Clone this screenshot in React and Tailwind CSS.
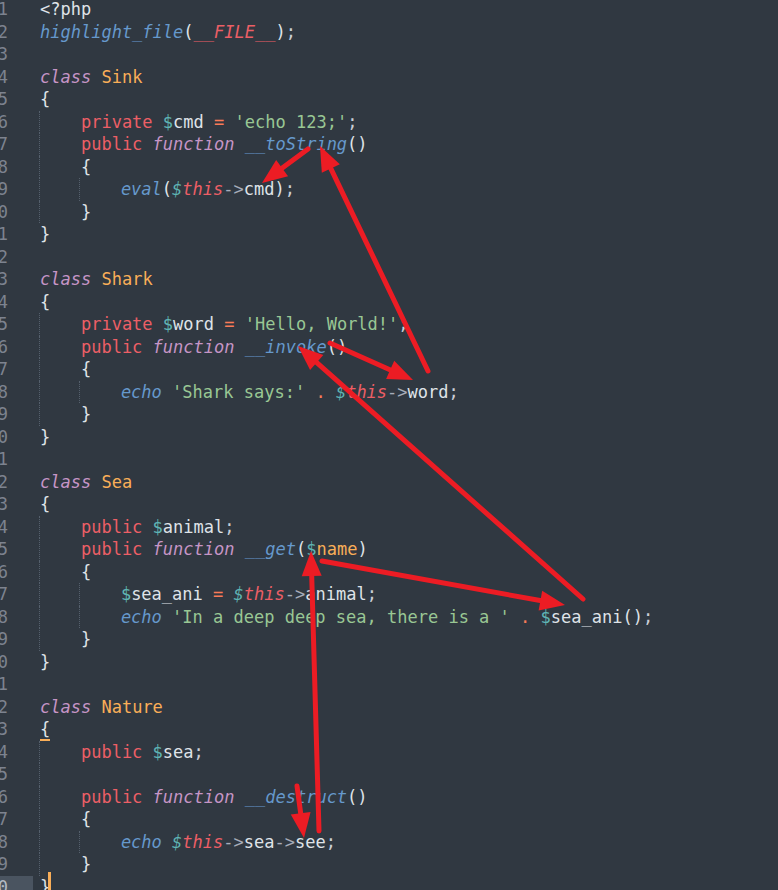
import React from "react";

const C = {
  d: "text-[#dfe3e8]",
  k: "text-[#ec5f66]",
  p: "text-[#c695c6] italic",
  b: "text-[#6699cc] italic",
  o: "text-[#f9ae58]",
  g: "text-[#99c794]",
  t: "text-[#5fb4b4]",
  op: "text-[#f97b58]",
  a: "text-[#a6acb9]",
  th: "text-[#ec5f66] italic",
  ti: "text-[#5fb4b4] italic",
  fr: "text-[#ec5f66] italic",
  s: "text-[#c9ced6]",
  u: "text-[#dfe3e8] border-b-2 border-[#f9ae58]",
};

const L = [
  [0, ["d", "<?php"]],
  [0, ["b", "highlight_file"], ["d", "("], ["fr", "__FILE__"], ["d", ")"], ["s", ";"]],
  [0],
  [0, ["p", "class"], ["d", " "], ["o", "Sink"]],
  [0, ["d", "{"]],
  [1, ["k", "private"], ["d", " "], ["t", "$"], ["d", "cmd "], ["op", "="], ["d", " "], ["g", "'echo 123;'"], ["s", ";"]],
  [1, ["k", "public"], ["d", " "], ["p", "function"], ["d", " "], ["b", "__toString"], ["d", "()"]],
  [1, ["d", "{"]],
  [2, ["b", "eval"], ["d", "("], ["ti", "$"], ["th", "this"], ["a", "->"], ["d", "cmd"], ["d", ")"], ["s", ";"]],
  [1, ["d", "}"]],
  [0, ["d", "}"]],
  [0],
  [0, ["p", "class"], ["d", " "], ["o", "Shark"]],
  [0, ["d", "{"]],
  [1, ["k", "private"], ["d", " "], ["t", "$"], ["d", "word "], ["op", "="], ["d", " "], ["g", "'Hello, World!'"], ["s", ";"]],
  [1, ["k", "public"], ["d", " "], ["p", "function"], ["d", " "], ["b", "__invoke"], ["d", "()"]],
  [1, ["d", "{"]],
  [2, ["b", "echo"], ["d", " "], ["g", "'Shark says:'"], ["d", " "], ["op", "."], ["d", " "], ["ti", "$"], ["th", "this"], ["a", "->"], ["d", "word"], ["s", ";"]],
  [1, ["d", "}"]],
  [0, ["d", "}"]],
  [0],
  [0, ["p", "class"], ["d", " "], ["o", "Sea"]],
  [0, ["d", "{"]],
  [1, ["k", "public"], ["d", " "], ["t", "$"], ["d", "animal"], ["s", ";"]],
  [1, ["k", "public"], ["d", " "], ["p", "function"], ["d", " "], ["b", "__get"], ["d", "("], ["t", "$"], ["o", "name"], ["d", ")"]],
  [1, ["d", "{"]],
  [2, ["t", "$"], ["d", "sea_ani "], ["op", "="], ["d", " "], ["ti", "$"], ["th", "this"], ["a", "->"], ["d", "animal"], ["s", ";"]],
  [2, ["b", "echo"], ["d", " "], ["g", "'In a deep deep sea, there is a '"], ["d", " "], ["op", "."], ["d", " "], ["t", "$"], ["d", "sea_ani()"], ["s", ";"]],
  [1, ["d", "}"]],
  [0, ["d", "}"]],
  [0],
  [0, ["p", "class"], ["d", " "], ["o", "Nature"]],
  [0, ["u", "{"]],
  [1, ["k", "public"], ["d", " "], ["t", "$"], ["d", "sea"], ["s", ";"]],
  [1],
  [1, ["k", "public"], ["d", " "], ["p", "function"], ["d", " "], ["b", "__destruct"], ["d", "()"]],
  [1, ["d", "{"]],
  [2, ["b", "echo"], ["d", " "], ["ti", "$"], ["th", "this"], ["a", "->"], ["d", "sea"], ["a", "->"], ["d", "see"], ["s", ";"]],
  [1, ["d", "}"]],
  [0, ["u", "}"], ["cursor", ""]],
];

const ARROWS = [
  [308, 149, 262, 183],
  [428, 371, 320, 146],
  [330, 343, 413, 380],
  [583, 599, 298, 346],
  [322, 561, 565, 605],
  [319, 831, 311, 551],
  [297, 786, 304, 838],
];

function Arrow({ x1, y1, x2, y2 }) {
  const dx = x2 - x1;
  const dy = y2 - y1;
  const len = Math.hypot(dx, dy);
  const ux = dx / len;
  const uy = dy / len;
  const hl = 25;
  const hw = 10;
  const bx = x2 - ux * hl;
  const by = y2 - uy * hl;
  const px = -uy;
  const py = ux;
  return (
    <g>
      <line x1={x1} y1={y1} x2={bx + ux * 4} y2={by + uy * 4} stroke="#ec1c24" strokeWidth="5" strokeLinecap="round" />
      <polygon
        points={`${x2},${y2} ${bx + px * hw},${by + py * hw} ${bx - px * hw},${by - py * hw}`}
        fill="#ec1c24"
      />
    </g>
  );
}

export default function App() {
  return (
    <div className="relative w-[778px] h-[890px] overflow-hidden bg-[#303841] font-['DejaVu_Sans_Mono',monospace] text-[17px]">
      <div className="mt-[-2px]">
        {L.map((line, i) => {
          const [indent, ...toks] = line;
          const current = i === L.length - 1;
          return (
            <div key={i} className="flex h-[22.5px] leading-[22.5px]">
              <div
                className={
                  current
                    ? "w-[33px] shrink-0 flex justify-end pr-[25px] bg-[#4a5460] text-[#b4bac5]"
                    : "w-[33px] shrink-0 flex justify-end pr-[25px] text-[#7d838f]"
                }
              >
                <span className="whitespace-nowrap">{i + 1}</span>
              </div>
              <div className="pl-[7px] whitespace-pre flex items-stretch">
                {Array.from({ length: indent }).map((_, j) => (
                  <span key={"g" + j} className="inline-block w-[4ch] h-[22.5px] border-l border-dotted border-[#55606d] -ml-px" />
                ))}
                <span className={indent > 0 ? "ml-px" : ""}>
                  {toks.map((t, j) =>
                    t[0] === "cursor" ? (
                      <span key={j} className="relative top-[-4px] -ml-[2px] inline-block w-[3px] h-[27px] align-top bg-[#f9ae58]" />
                    ) : (
                      <span key={j} className={C[t[0]]}>
                        {t[1]}
                      </span>
                    )
                  )}
                </span>
              </div>
            </div>
          );
        })}
      </div>
      <svg className="absolute inset-0 pointer-events-none" width="778" height="890" viewBox="0 0 778 890">
        {ARROWS.map((a, i) => (
          <Arrow key={i} x1={a[0]} y1={a[1]} x2={a[2]} y2={a[3]} />
        ))}
      </svg>
    </div>
  );
}
